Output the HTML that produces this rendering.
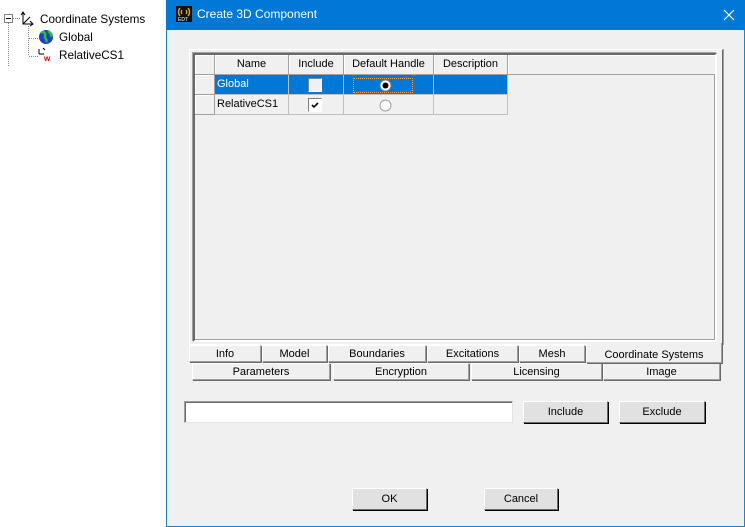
<!DOCTYPE html>
<html><head><meta charset="utf-8"><style>
*{box-sizing:border-box;margin:0;padding:0}
body{width:745px;height:527px;background:#fff;position:relative;overflow:hidden;font-family:"Liberation Sans",sans-serif;font-size:11px;color:#000}
.a{position:absolute}
.dlg{left:166px;top:0;width:579px;height:527px;background:#f0f0f0;border:1px solid #1883d7;border-top:none}
.title{left:166px;top:0;width:579px;height:30px;background:#0078d7;color:#fff;font-size:12px}
.btn{position:absolute;background:#e1e1e1;border:1px solid;border-color:#fff #696969 #696969 #fff;box-shadow:1px 1px 0 #000;text-align:center;font-size:11px}
.tab{position:absolute;border:1px solid;border-color:#fff #a0a0a0 #a0a0a0 #fff;box-shadow:1px 1px 0 #696969;text-align:center;background:#f0f0f0;height:17px;line-height:17px;font-size:11px}
.hc{position:absolute;top:0;height:20px;border-right:1px solid #a0a0a0;border-bottom:1px solid #a0a0a0;background:#f0f0f0;text-align:center;line-height:19px;box-shadow:inset 1px 1px 0 #fff}
.cell{position:absolute;height:20px;border-right:1px solid #c0c0c0;border-bottom:1px solid #c0c0c0;line-height:19px;padding-left:2px}
.rh{position:absolute;left:0;width:20px;height:20px;border-right:1px solid #a0a0a0;border-bottom:1px solid #a0a0a0;box-shadow:inset 1px 1px 0 #fff;background:#f0f0f0}
</style></head><body>
<svg class="a" style="left:0;top:0" width="60" height="70">
<rect x="4.5" y="14.5" width="8" height="8" fill="#fff" stroke="#808080"/>
<line x1="6" y1="18.5" x2="11" y2="18.5" stroke="#000"/>
<g stroke="#888" stroke-dasharray="1,1"><line x1="8.5" y1="23" x2="8.5" y2="66"/><line x1="13" y1="18.5" x2="20" y2="18.5"/><line x1="28.5" y1="26" x2="28.5" y2="56"/><line x1="29" y1="38.5" x2="38" y2="38.5"/><line x1="29" y1="56.5" x2="38" y2="56.5"/></g>
<path d="M23 13v11h10M21 15l2-3 2 3M30 21l3 3-3 2M23 24l7-7" stroke="#000" fill="none"/>
<circle cx="46" cy="37" r="7" fill="#1a3fc9"/><path d="M41 33c3-2 5 0 4 3s3 3 1 6M48 31c2 2 4 3 3 6" stroke="#2fbf2f" stroke-width="2.5" fill="none"/>
<path d="M39 54v-5M39 54h5M43 48l2 2" stroke="#000" fill="none"/><text x="44" y="61" font-size="8" fill="#d00" font-weight="bold" font-family="Liberation Sans">w</text>
</svg>
<div class="a" style="left:40px;top:13px;font-size:11.7px">Coordinate Systems</div>
<div class="a" style="left:59px;top:31px;font-size:11.7px">Global</div>
<div class="a" style="left:59px;top:49px;font-size:11.7px">RelativeCS1</div>
<div class="a dlg"></div>
<div class="a title">
<svg class="a" style="left:10px;top:6px" width="16" height="16"><rect width="16" height="16" fill="#111"/><path d="M4 2c-2 2-2 6 0 8M12 2c2 2 2 6 0 8M6 4c-1 1-1 3 0 4M10 4c1 1 1 3 0 4" stroke="#e0a030" fill="none" stroke-width="1.4"/><text x="2" y="15" font-size="5" fill="#fff" font-family="Liberation Sans">EDT</text></svg>
<div class="a" style="left:31px;top:7px">Create 3D Component</div>
<svg class="a" style="left:557px;top:9px" width="12" height="12"><path d="M1 1L11 11M11 1L1 11" stroke="#fff" stroke-width="1.2"/></svg>
</div>
<div class="a" style="left:189px;top:49px;width:534px;height:296px;border:1px solid;border-color:#fff #696969 #fff #fff;box-shadow:1px 0 0 #a0a0a0"></div>
<div class="a" style="left:193px;top:53px;width:524px;height:289px;border:2px solid;border-color:#696969 #fff #fff #696969;box-shadow:inset -1px -1px 0 #a0a0a0, -1px -1px 0 #a0a0a0;background:#f0f0f0;overflow:hidden">
<div style="position:relative">
<div class="rh" style="top:0"></div>
<div class="hc" style="left:20px;width:74px">Name</div>
<div class="hc" style="left:94px;width:55px">Include</div>
<div class="hc" style="left:149px;width:90px">Default Handle</div>
<div class="hc" style="left:239px;width:74px">Description</div>
<div class="hc" style="left:313px;width:210px"></div>
<div class="rh" style="top:20px"></div>
<div class="rh" style="top:40px"></div>
<div class="cell" style="top:20px;left:20px;width:74px;background:#0078d7;color:#fff;border-right-color:#c0c0c0">Global</div>
<div class="cell" style="top:20px;left:94px;width:55px;background:#0078d7"></div>
<div class="cell" style="top:20px;left:149px;width:90px;background:#0078d7"></div>
<div class="cell" style="top:20px;left:239px;width:74px;background:#0078d7"></div>
<div class="cell" style="top:40px;left:20px;width:74px">RelativeCS1</div>
<div class="cell" style="top:40px;left:94px;width:55px"></div>
<div class="cell" style="top:40px;left:149px;width:90px"></div>
<div class="cell" style="top:40px;left:239px;width:74px"></div>
<div class="a" style="left:113px;top:23px;width:14px;height:14px;border:1px solid;border-color:#808080 #fff #fff #808080;background:#f0f0f0"></div>
<div class="a" style="left:113px;top:43px;width:14px;height:14px;border:1px solid;border-color:#808080 #fff #fff #808080;background:#fff"><svg width="12" height="12"><path d="M3 6l2 2 4-4" stroke="#000" stroke-width="1.6" fill="none"/></svg></div>
<div class="a" style="left:158px;top:23px;width:60px;height:15px;border:1px dotted #f5a040"></div>
<svg class="a" style="left:184px;top:24px" width="14" height="14"><circle cx="6.5" cy="6.5" r="5.5" fill="#fff" stroke="#808080"/><circle cx="6.5" cy="6.5" r="3" fill="#000"/></svg>
<svg class="a" style="left:184px;top:44px" width="14" height="14"><circle cx="6.5" cy="6.5" r="5.5" fill="#fff" stroke="#a0a0a0"/></svg>
</div></div>
<div class="tab" style="left:189px;top:345px;width:72px">Info</div>
<div class="tab" style="left:262px;top:345px;width:65px">Model</div>
<div class="tab" style="left:328px;top:345px;width:98px">Boundaries</div>
<div class="tab" style="left:427px;top:345px;width:91px">Excitations</div>
<div class="tab" style="left:519px;top:345px;width:66px">Mesh</div>
<div class="tab" style="left:192px;top:363px;width:138px">Parameters</div>
<div class="tab" style="left:333px;top:363px;width:136px">Encryption</div>
<div class="tab" style="left:471px;top:363px;width:131px">Licensing</div>
<div class="tab" style="left:603px;top:363px;width:117px">Image</div>
<div class="tab" style="left:586px;top:343px;width:136px;height:20px;line-height:24px;border-top:none;border-left-color:#fff">Coordinate Systems</div>
<div class="a" style="left:184px;top:401px;width:329px;height:22px;background:#fff;border:1px solid;border-color:#a0a0a0 #e3e3e3 #e3e3e3 #a0a0a0;box-shadow:inset 1px 1px 0 #696969"></div>
<div class="btn" style="left:523px;top:401px;width:85px;height:22px;line-height:21px">Include</div>
<div class="btn" style="left:619px;top:401px;width:86px;height:22px;line-height:21px">Exclude</div>
<div class="btn" style="left:352px;top:488px;width:75px;height:22px;line-height:21px">OK</div>
<div class="btn" style="left:484px;top:488px;width:74px;height:22px;line-height:21px">Cancel</div>
</body></html>
